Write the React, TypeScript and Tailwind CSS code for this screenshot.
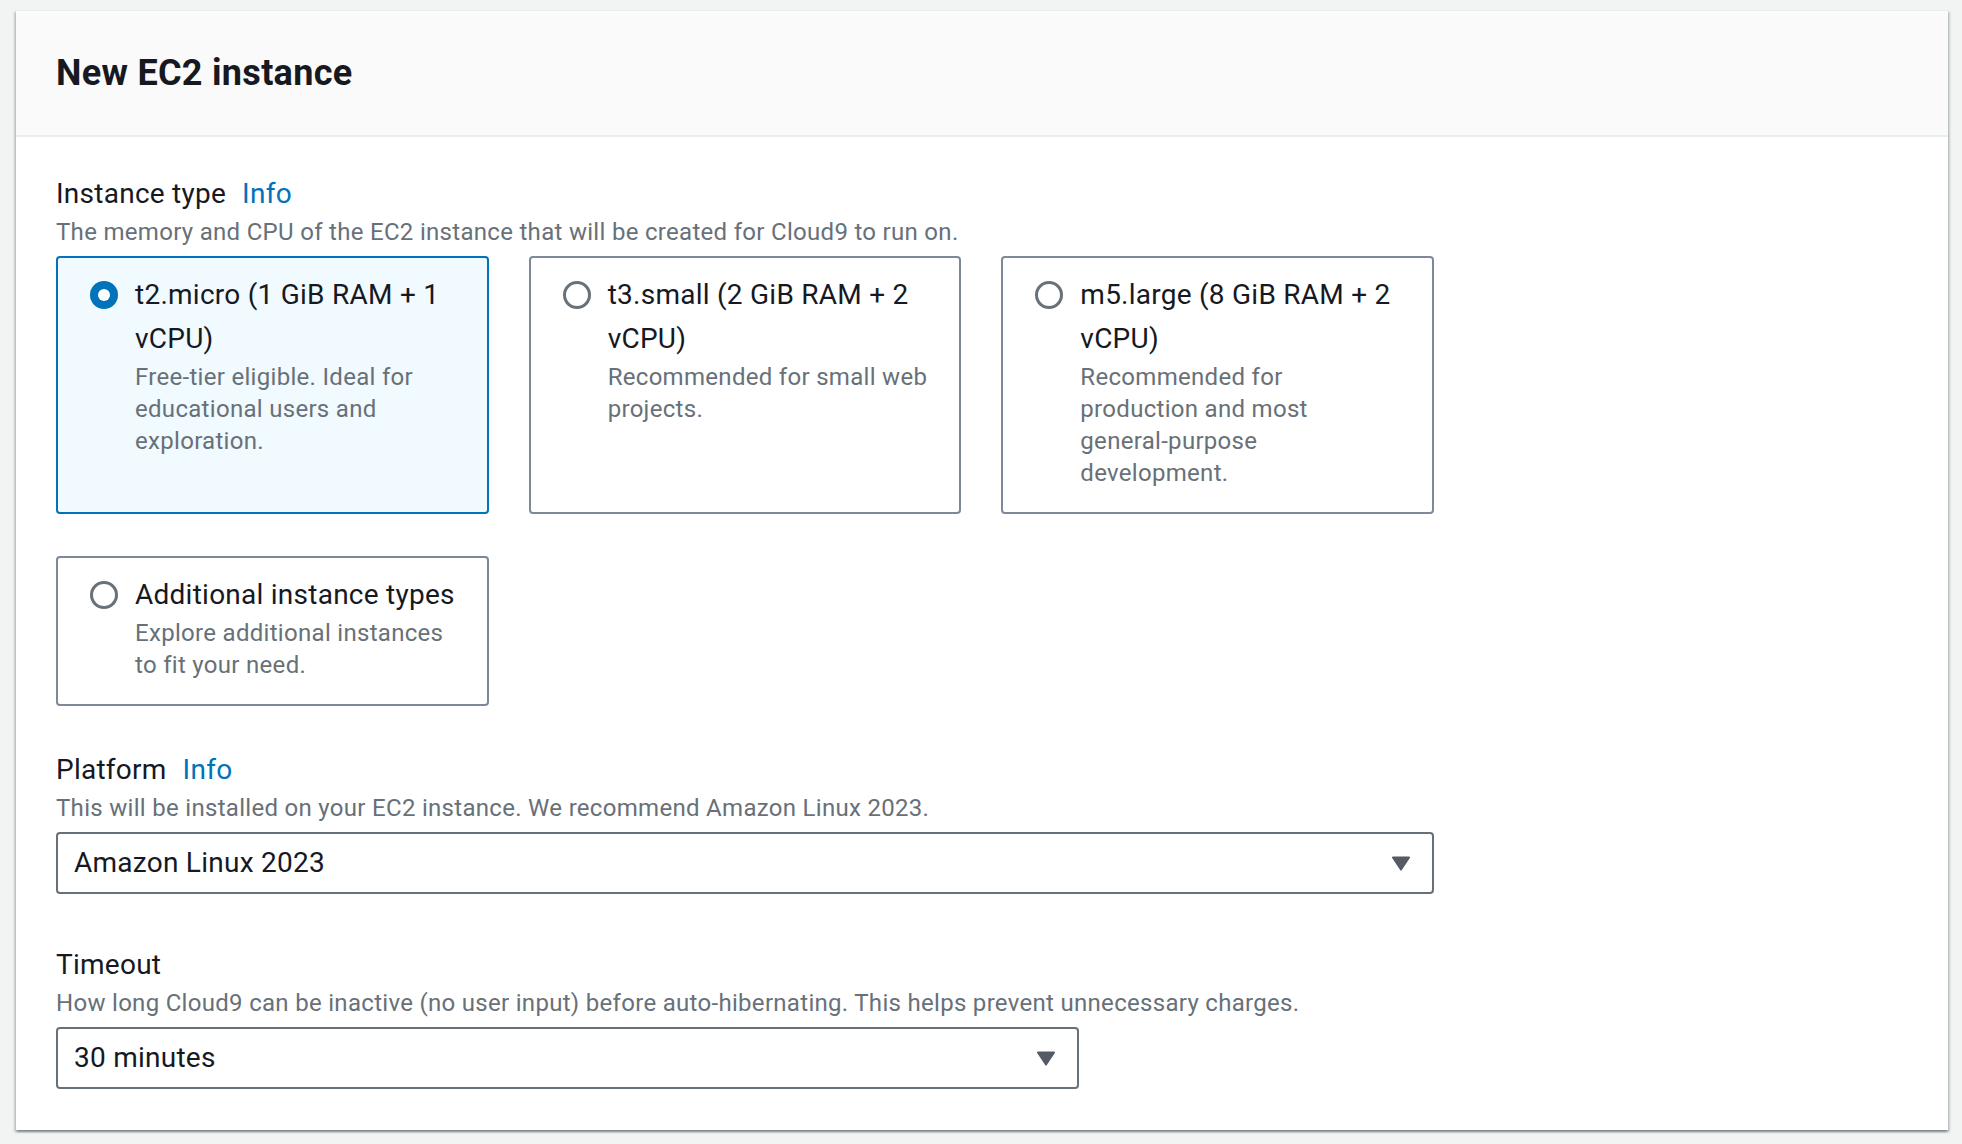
import { ReactNode } from 'react';

const FONT = "font-['Roboto','Liberation_Sans',Arial,sans-serif]";

const tiles = [
  {
    id: 't2',
    title: ['t2.micro (1 GiB RAM + 1', 'vCPU)'],
    desc: ['Free-tier eligible. Ideal for', 'educational users and', 'exploration.'],
    selected: true,
  },
  {
    id: 't3',
    title: ['t3.small (2 GiB RAM + 2', 'vCPU)'],
    desc: ['Recommended for small web', 'projects.'],
  },
  {
    id: 'm5',
    title: ['m5.large (8 GiB RAM + 2', 'vCPU)'],
    desc: ['Recommended for', 'production and most', 'general-purpose', 'development.'],
  },
  {
    id: 'more',
    title: ['Additional instance types'],
    desc: ['Explore additional instances', 'to fit your need.'],
  },
];

export default function App() {
  return (
    <div className={`min-h-screen bg-[#f2f3f3] pt-[10px] pl-[16px] text-[#16191f] ${FONT}`}>
      <div className="w-[1932px] bg-white border-t border-[#eaeded] shadow-[0_2px_2px_0_rgba(0,28,36,0.3),2px_2px_2px_0_rgba(0,28,36,0.15),-2px_2px_2px_0_rgba(0,28,36,0.15)]">
        {/* Header */}
        <div className="h-[126px] bg-[#fafafa] border-b-2 border-[#eaeded] flex items-center px-[40px]">
          <h2 className="text-[36px] leading-[44px] font-bold tracking-[0.3px]">New EC2 instance</h2>
        </div>

        <div className="px-[40px] pt-[35px] pb-[41px]">
          <FieldHeader label="Instance type" info description="The memory and CPU of the EC2 instance that will be created for Cloud9 to run on." />
          <div className="mt-[8px] w-[1378px] grid grid-cols-3 gap-x-[40px] gap-y-[42px]">
            {tiles.map((t) => (
              <Tile key={t.id} title={t.title} desc={t.desc} selected={t.selected} />
            ))}
          </div>

          <div className="mt-[42px]">
            <FieldHeader label="Platform" info description="This will be installed on your EC2 instance. We recommend Amazon Linux 2023." />
            <SelectBox value="Amazon Linux 2023" width="w-[1378px]" />
          </div>

          <div className="mt-[49px]">
            <FieldHeader
              label="Timeout"
              description="How long Cloud9 can be inactive (no user input) before auto-hibernating. This helps prevent unnecessary charges."
            />
            <SelectBox value="30 minutes" width="w-[1023px]" />
          </div>
        </div>
      </div>
    </div>
  );
}

function FieldHeader({ label, info, description }: { label: string; info?: boolean; description: string }) {
  return (
    <div>
      <div className="flex items-baseline text-[28px] leading-[44px] tracking-[0.25px]">
        <span>{label}</span>
        {info && <a className="ml-[16px] text-[#0073bb] cursor-pointer">Info</a>}
      </div>
      <p className="text-[24px] leading-[32px] tracking-[0.3px] text-[#687078]">{description}</p>
    </div>
  );
}

function Tile({ title, desc, selected = false }: { title: string[]; desc: string[]; selected?: boolean }) {
  return (
    <div
      className={`flex rounded-[4px] border-2 pl-[32px] pr-[20px] pt-[15px] pb-[23px] ${
        selected ? 'border-[#0073bb] bg-[#f1faff]' : 'border-[#7d8998] bg-white'
      }`}
    >
      <div className="mt-[8px] shrink-0">
        <Radio checked={selected} />
      </div>
      <div className="ml-[17px]">
        <div className="text-[28px] leading-[44px] tracking-[0.25px]">
          {title.map((l) => (
            <div key={l} className="whitespace-nowrap">{l}</div>
          ))}
        </div>
        <div className="text-[24px] leading-[32px] tracking-[0.3px] text-[#687078]">
          {desc.map((l) => (
            <div key={l} className="whitespace-nowrap">{l}</div>
          ))}
        </div>
      </div>
    </div>
  );
}

function Radio({ checked }: { checked: boolean }) {
  if (checked) {
    return (
      <div className="w-[28px] h-[28px] rounded-full bg-[#0073bb] flex items-center justify-center">
        <div className="w-[12px] h-[12px] rounded-full bg-white" />
      </div>
    );
  }
  return <div className="w-[28px] h-[28px] rounded-full border-[3px] border-[#687078] bg-white" />;
}

function SelectBox({ value, width }: { value: string; width: string }): ReactNode {
  return (
    <div
      className={`mt-[8px] ${width} h-[62px] rounded-[4px] border-2 border-[#687078] bg-white flex items-center justify-between pl-[16px] pr-[21px]`}
    >
      <span className="text-[28px] leading-[44px] tracking-[0.25px]">{value}</span>
      <svg width="20" height="16" viewBox="0 0 20 16" aria-hidden="true">
        <path d="M2 1.5h16a1 1 0 0 1 .85 1.53l-8 12a1 1 0 0 1-1.7 0l-8-12A1 1 0 0 1 2 1.5z" fill="#545b64" />
      </svg>
    </div>
  );
}
